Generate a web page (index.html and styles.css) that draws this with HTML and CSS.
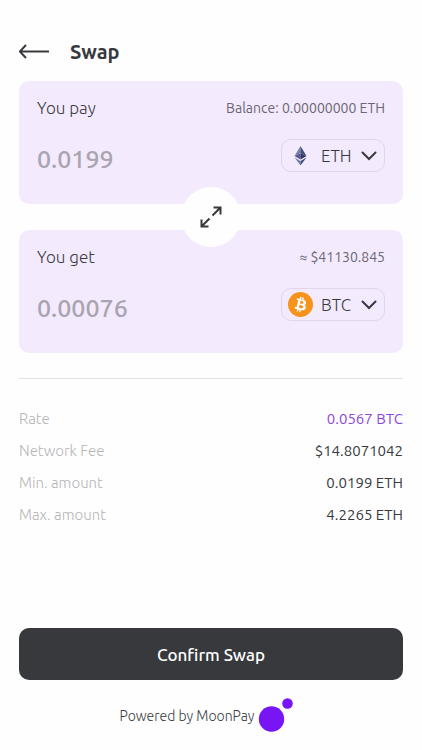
FILE: index.html
```html
<!DOCTYPE html>
<html lang="en">
<head>
<meta charset="utf-8">
<meta name="viewport" content="width=device-width, initial-scale=1">
<title>Swap</title>
<link rel="stylesheet" href="styles.css">
</head>
<body>
<main class="screen">
  <header class="header">
    <button class="back" type="button" aria-label="Back">
      <svg width="32" height="16" viewBox="0 0 32 16" fill="none" stroke="currentColor" stroke-width="2"><path d="M30 7.500H1M7 1L.800 7.500L7 14"/></svg>
    </button>
    <h1 class="title">Swap</h1>
  </header>

  <form class="form">
    <div class="cards">
      <section class="card">
        <div class="row">
          <label class="label" for="pay">You pay</label>
          <span class="note">Balance: 0.00000000 ETH</span>
        </div>
        <div class="row">
          <input class="amount" id="pay" type="text" inputmode="decimal" value="0.0199">
          <div class="currency">
            <svg class="coin" width="25" height="25" viewBox="0 0 25 25">
              <path fill="#7480ac" d="M12.500 3L6.500 13L12.500 10.300Z"/>
              <path fill="#454d7a" d="M12.500 3L18.500 13L12.500 10.300Z"/>
              <path fill="#535c8c" d="M12.500 10.300L6.500 13L12.500 16.500Z"/>
              <path fill="#303762" d="M12.500 10.300L18.500 13L12.500 16.500Z"/>
              <path fill="#7480ac" d="M6.500 14.600L12.500 18.100V22.500Z"/>
              <path fill="#454d7a" d="M18.500 14.600L12.500 18.100V22.500Z"/>
            </svg>
            <select class="select" aria-label="Currency to pay"><option>ETH</option></select>
            <svg class="chevron" width="16" height="10" viewBox="0 0 16 10" fill="none" stroke="currentColor" stroke-width="2" stroke-linecap="round"><path d="M1.500 1.500L8 8L14.500 1.500"/></svg>
          </div>
        </div>
      </section>

      <button class="flip" type="button" aria-label="Switch currencies">
        <svg width="22" height="22" viewBox="0 0 22 22" fill="none" stroke="currentColor" stroke-width="2"><path d="M12.500 9.500L20.500 1.500M13.500 1.500H20.500V8.500M9.500 12.500L1.500 20.500M1.500 13.500V20.500H8.500"/></svg>
      </button>

      <section class="card">
        <div class="row">
          <label class="label" for="get">You get</label>
          <span class="note">≈ $41130.845</span>
        </div>
        <div class="row">
          <input class="amount" id="get" type="text" inputmode="decimal" value="0.00076">
          <div class="currency">
            <svg class="coin" width="25" height="25" viewBox="0 0 32 32">
              <circle cx="16" cy="16" r="16" fill="#f7931a"/>
              <path fill="#fff" d="M23.189 14.020c.314-2.096-1.283-3.223-3.465-3.975l.708-2.840-1.728-.430-.690 2.765c-.454-.114-.920-.220-1.385-.326l.695-2.783L15.596 6l-.708 2.839c-.376-.086-.746-.170-1.104-.260l.002-.009-2.384-.595-.460 1.846s1.283.294 1.256.312c.700.175.826.638.805 1.006l-.806 3.235c.048.012.110.030.180.057l-.183-.045-1.130 4.532c-.086.212-.303.531-.793.410.018.025-1.256-.313-1.256-.313l-.858 1.978 2.250.561c.418.105.828.215 1.231.318l-.715 2.872 1.727.430.708-2.840c.472.127.930.245 1.378.357l-.706 2.828 1.728.430.715-2.866c2.948.558 5.164.333 6.097-2.333.752-2.146-.037-3.385-1.588-4.192 1.130-.260 1.980-1.003 2.207-2.538zm-3.950 5.538c-.533 2.147-4.148.986-5.320.695l.950-3.805c1.172.293 4.929.872 4.370 3.110zm.535-5.569c-.487 1.953-3.495.960-4.470.717l.860-3.450c.975.243 4.118.696 3.610 2.733z"/>
            </svg>
            <select class="select" aria-label="Currency to get"><option>BTC</option></select>
            <svg class="chevron" width="16" height="10" viewBox="0 0 16 10" fill="none" stroke="currentColor" stroke-width="2" stroke-linecap="round"><path d="M1.500 1.500L8 8L14.500 1.500"/></svg>
          </div>
        </div>
      </section>
    </div>

    <dl class="details">
      <div class="detail"><dt>Rate</dt><dd class="accent">0.0567 BTC</dd></div>
      <div class="detail"><dt>Network Fee</dt><dd>$14.8071042</dd></div>
      <div class="detail"><dt>Min. amount</dt><dd>0.0199 ETH</dd></div>
      <div class="detail"><dt>Max. amount</dt><dd>4.2265 ETH</dd></div>
    </dl>

    <button class="confirm" type="submit">Confirm Swap</button>
  </form>

  <footer class="footer">
    <span>Powered by MoonPay</span>
    <svg width="36" height="36" viewBox="0 0 36 36" fill="#7715f5"><circle cx="13.500" cy="21" r="12.700"/><circle cx="29.500" cy="5.500" r="5.300"/></svg>
  </footer>
</main>
</body>
</html>
```
FILE: styles.css
```css
* {
  box-sizing: border-box;
}

body {
  margin: 0;
  background: #fefefe;
  color: #38393d;
  font-family: Ubuntu, "Open Sans", "Noto Sans", sans-serif;
  font-size: 15px;
  line-height: 20px;
}

button,
input,
select {
  font: inherit;
  color: inherit;
  border: 0;
  padding: 0;
  background: none;
}

button,
select {
  cursor: pointer;
}

svg {
  display: block;
  flex: none;
}

.screen {
  display: flex;
  flex-direction: column;
  min-height: 100vh;
  padding: 40px 19px 16px;
}

.header {
  display: flex;
  align-items: center;
  gap: 19px;
  margin-bottom: 17px;
}

.title {
  margin: 0;
  font-size: 20px;
  line-height: 24px;
  font-weight: 700;
}

.form {
  display: flex;
  flex-direction: column;
  flex: 1;
}

.cards {
  position: relative;
  display: grid;
  grid-template-columns: minmax(0, 1fr);
  gap: 26px;
}

.card {
  display: grid;
  grid-template-columns: minmax(0, 1fr);
  gap: 21px;
  padding: 17px 18px 25px;
  border-radius: 10px;
  background: #f3eafe;
}

.row {
  display: flex;
  justify-content: space-between;
}

.label {
  font-size: 17px;
  font-weight: 300;
}

.note {
  font-size: 14px;
  color: #6b6671;
}

.amount {
  flex: 1;
  min-width: 0;
  height: 39px;
  font-size: 25px;
  font-weight: 500;
  color: #aaa4b0;
  outline: 0;
}

.currency {
  position: relative;
  display: flex;
  flex: none;
  align-items: center;
  width: 104px;
  height: 33px;
  border: 1px solid #dfd6e9;
  border-radius: 10px;
}

.coin,
.chevron {
  position: absolute;
  pointer-events: none;
}

.coin {
  left: 6px;
}

.chevron {
  right: 7px;
}

.select {
  width: 100%;
  height: 100%;
  padding-left: 39px;
  appearance: none;
  font-size: 17px;
  font-weight: 300;
  outline: 0;
}

.flip {
  position: absolute;
  top: 50%;
  left: 50%;
  display: grid;
  place-items: center;
  width: 60px;
  height: 60px;
  border-radius: 50%;
  background: #fefefe;
  transform: translate(-50%, -50%);
}

.card {
  padding-bottom: 26px;
}

.details {
  display: grid;
  gap: 12px;
  margin: 25px 0;
  padding-top: 30px;
  border-top: 1px solid #e2e2e2;
}

.detail {
  display: flex;
  justify-content: space-between;
}

.detail dt {
  color: #b5b5b7;
  font-weight: 300;
}

.detail dd {
  margin: 0;
}

.detail .accent {
  color: #8d46dc;
}

.confirm {
  height: 52px;
  margin-top: auto;
  padding-top: 2px;
  border-radius: 10px;
  background: #38393d;
  color: #fff;
  font-size: 17px;
  font-weight: 500;
}

.footer {
  display: flex;
  align-items: center;
  justify-content: center;
  gap: 4px;
  margin-top: 18px;
  padding-right: 8px;
  font-size: 14px;
  font-weight: 300;
}
```
